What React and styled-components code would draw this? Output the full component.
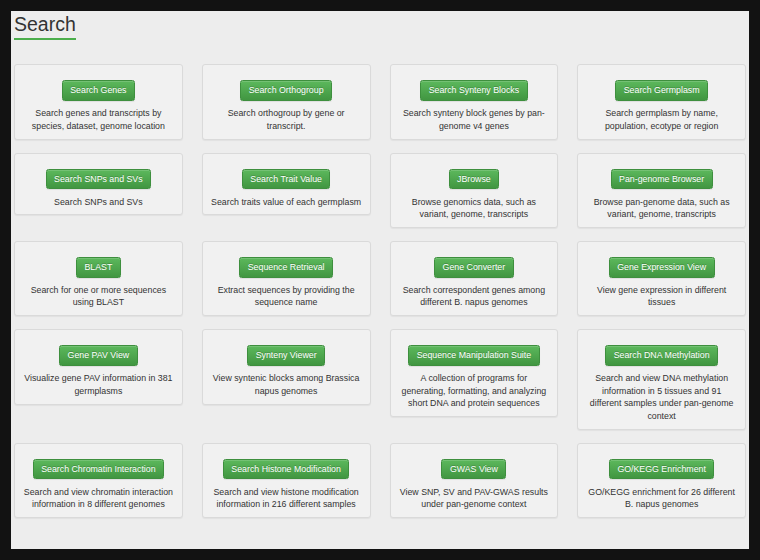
import React from "react";
import styled, { createGlobalStyle } from "styled-components";

const GlobalStyle = createGlobalStyle`
    html, body {
        margin: 0;
        padding: 0;
        background: #121212;
    }
    body {
        font-family: 'Liberation Sans', Arial, sans-serif;
        color: #333;
    }
`;

const Frame = styled.div`
    width: 760px;
    height: 560px;
    padding: 11px;
    box-sizing: border-box;
    background: #121212;
`;

const Panel = styled.div`
    height: 100%;
    background: #ededed;
    padding: 3px 3px 0;
    box-sizing: border-box;
    overflow: hidden;
`;

const Title = styled.h2`
    display: inline-block;
    margin: 0;
    padding-bottom: 3px;
    font-size: 19.5px;
    font-weight: 500;
    line-height: 1.1;
    color: #333;
    border-bottom: 2px solid #4cae4c;
`;

const Grid = styled.div`
    margin-top: 24px;
    display: grid;
    grid-template-columns: repeat(4, 1fr);
    column-gap: 19px;
    row-gap: 13px;
    align-items: start;
`;

const Card = styled.div`
    background: #f1f1f1;
    border: 1px solid #dadada;
    border-radius: 3px;
    box-shadow: 0 1px 1px rgba(0, 0, 0, 0.05);
    padding: 14px 4px 6.2px;
    text-align: center;
`;

const ActionButton = styled.a`
    display: inline-block;
    padding: 3px 7.5px;
    font-size: 8.8px;
    line-height: 12.6px;
    color: #fff;
    text-decoration: none;
    text-shadow: 0 -1px 0 rgba(0, 0, 0, 0.2);
    background-image: linear-gradient(to bottom, #5cb85c 0, #419641 100%);
    border: 1px solid #3e8f3e;
    border-radius: 2.5px;
    box-shadow: inset 0 1px 0 rgba(255, 255, 255, 0.15), 0 1px 1px rgba(0, 0, 0, 0.075);
    cursor: pointer;
`;

const Description = styled.p`
    margin: 6.3px 0 0;
    font-size: 8.8px;
    line-height: 12.6px;
    color: #333;
    white-space: nowrap;
`;

// lines are kept as they wrap on the original page
const tools = [
    ["Search Genes", ["Search genes and transcripts by", "species, dataset, genome location"]],
    ["Search Orthogroup", ["Search orthogroup by gene or", "transcript."]],
    ["Search Synteny Blocks", ["Search synteny block genes by pan-", "genome v4 genes"]],
    ["Search Germplasm", ["Search germplasm by name,", "population, ecotype or region"]],
    ["Search SNPs and SVs", ["Search SNPs and SVs"]],
    ["Search Trait Value", ["Search traits value of each germplasm"]],
    ["JBrowse", ["Browse genomics data, such as", "variant, genome, transcripts"]],
    ["Pan-genome Browser", ["Browse pan-genome data, such as", "variant, genome, transcripts"]],
    ["BLAST", ["Search for one or more sequences", "using BLAST"]],
    ["Sequence Retrieval", ["Extract sequences by providing the", "sequence name"]],
    ["Gene Converter", ["Search correspondent genes among", "different B. napus genomes"]],
    ["Gene Expression View", ["View gene expression in different", "tissues"]],
    ["Gene PAV View", ["Visualize gene PAV information in 381", "germplasms"]],
    ["Synteny Viewer", ["View syntenic blocks among Brassica", "napus genomes"]],
    ["Sequence Manipulation Suite", ["A collection of programs for", "generating, formatting, and analyzing", "short DNA and protein sequences"]],
    ["Search DNA Methylation", ["Search and view DNA methylation", "information in 5 tissues and 91", "different samples under pan-genome", "context"]],
    ["Search Chromatin Interaction", ["Search and view chromatin interaction", "information in 8 different genomes"]],
    ["Search Histone Modification", ["Search and view histone modification", "information in 216 different samples"]],
    ["GWAS View", ["View SNP, SV and PAV-GWAS results", "under pan-genome context"]],
    ["GO/KEGG Enrichment", ["GO/KEGG enrichment for 26 different", "B. napus genomes"]],
];

function App() {
    return (
        <>
            <GlobalStyle />
            <Frame>
                <Panel>
                    <Title>Search</Title>
                    <Grid>
                        {tools.map(([name, lines]) => (
                            <Card key={name}>
                                <ActionButton>{name}</ActionButton>
                                <Description>
                                    {lines.map((line, i) => (
                                        <React.Fragment key={i}>
                                            {i > 0 && <br />}
                                            {line}
                                        </React.Fragment>
                                    ))}
                                </Description>
                            </Card>
                        ))}
                    </Grid>
                </Panel>
            </Frame>
        </>
    );
}

export default App;
